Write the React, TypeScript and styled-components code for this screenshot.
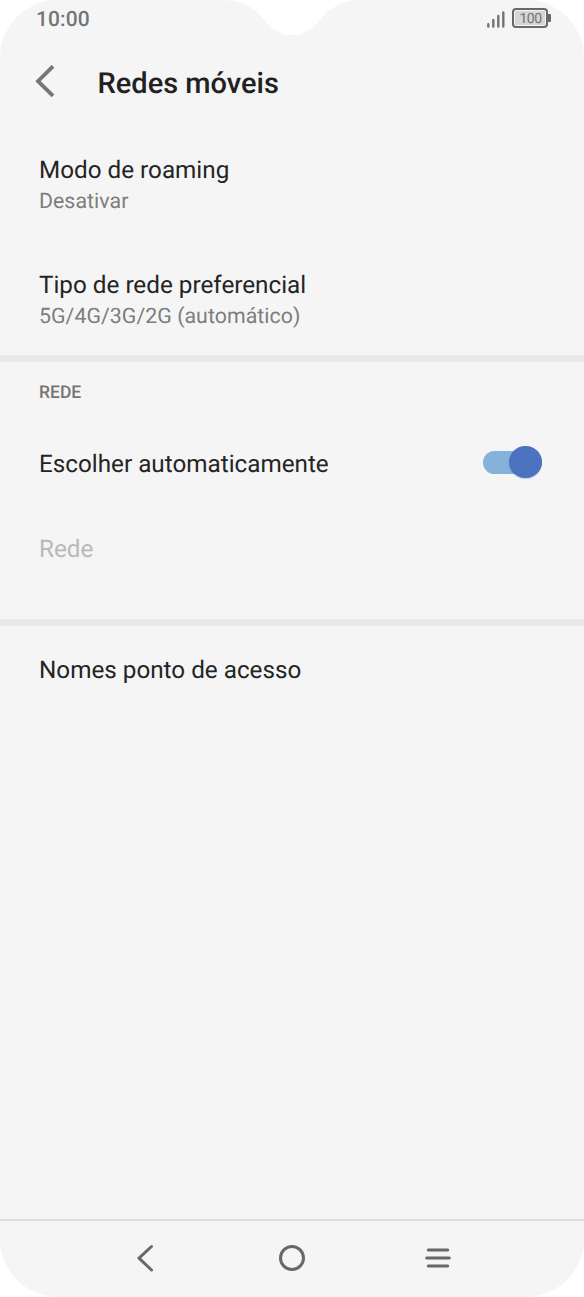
import React from 'react';
import styled, { createGlobalStyle } from 'styled-components';

const GlobalStyle = createGlobalStyle`
  * { box-sizing: border-box; }
  body { margin: 0; background: #fff; font-family: Roboto, sans-serif; text-rendering: geometricPrecision; }
`;

const Screen = styled.div`
  position: relative;
  display: flex;
  flex-direction: column;
  width: 584px;
  height: 1297px;
  overflow: hidden;
  border-radius: 58px;
  background: #f5f5f5;
`;

const Notch = styled.svg`
  position: absolute;
  top: 0;
  left: 222px;
`;

const StatusBar = styled.div`
  display: flex;
  justify-content: space-between;
  height: 40px;
  padding: 6px 33px 0 36px;
`;

const Clock = styled.span`
  height: 26px;
  margin-top: 1px;
  line-height: 26px;
  font-size: 21px;
  font-weight: 500;
  letter-spacing: 0.1px;
  color: #757575;
`;

const StatusIcons = styled.div`
  display: flex;
  gap: 7px;
`;

const Signal = styled.svg`
  margin-top: 4px;
`;

const Battery = styled.div`
  display: flex;
  align-items: center;
  height: 20px;
  margin-top: 2px;
`;

const BatteryBody = styled.div`
  display: flex;
  width: 36px;
  height: 20px;
  padding: 1px;
  border: 2px solid #686868;
  border-radius: 4px;
`;

const BatteryLevel = styled.span`
  flex: 1;
  padding-left: 1px;
  background: #d6d6d6;
  color: #737373;
  font-size: 14px;
  letter-spacing: -0.5px;
  line-height: 17px;
  height: 14px;
  text-align: center;
`;

const BatteryTip = styled.span`
  width: 3px;
  height: 8px;
  background: #686868;
  border-radius: 0 1px 1px 0;
`;

const Header = styled.header`
  display: flex;
  align-items: center;
  gap: 41.5px;
  height: 83px;
  padding-left: 35px;
`;

const Title = styled.h1`
  margin: 5px 0 0;
  font-size: 29px;
  line-height: 38px;
  font-weight: 500;
  color: #212121;
`;

const Section = styled.section<{ $height: number }>`
  height: ${({ $height }) => $height}px;
  padding: 0 42px 0 39px;
`;

const Row = styled.div<{ $height: number; $top: number }>`
  display: flex;
  justify-content: space-between;
  height: ${({ $height }) => $height}px;
  padding-top: ${({ $top }) => $top}px;
`;

const Label = styled.div<{ $disabled?: boolean }>`
  font-size: 24.25px;
  line-height: 30px;
  color: ${({ $disabled }) => ($disabled ? '#b9b9b9' : '#242424')};
`;

const Detail = styled.div`
  margin-top: 4px;
  font-size: 21.3px;
  line-height: 26px;
  letter-spacing: 0.05px;
  color: #7d7d7d;
`;

const Caption = styled.h2`
  margin: 0;
  font-size: 17.5px;
  line-height: 22px;
  font-weight: 500;
  color: #757575;
`;

const Divider = styled.div`
  height: 7px;
  background: #e8e8e8;
`;

const Switch = styled.div`
  display: flex;
  align-items: center;
  justify-content: flex-end;
  width: 58.5px;
  height: 23px;
  margin-top: 1.5px;
  margin-right: 0.4px;
  border-radius: 12px;
  background: #86b2da;
`;

const Thumb = styled.span`
  flex: none;
  width: 32.5px;
  height: 32.5px;
  border-radius: 50%;
  background: #4b73bf;
  box-shadow: 0 1px 1px rgba(75, 115, 191, 0.3);
`;

const NavBar = styled.nav`
  display: flex;
  justify-content: center;
  gap: 118px;
  height: 78px;
  margin-top: auto;
  padding-top: 23px;
  border-top: 2px solid #dcdcdc;
`;

const NavIcon = styled.svg`
  width: 28px;
  height: 28px;
  fill: none;
  stroke: #686868;
  stroke-width: 3;
  stroke-linecap: round;
  stroke-linejoin: round;
`;

export default function App() {
  return (
    <Screen>
      <GlobalStyle />
      <Notch width="140" height="36" viewBox="0 0 140 36">
        <path d="M0 0C20 0 33 8 43 21C51 31 60 35.3 70 35.3C80 35.3 89 31 97 21C107 8 120 0 140 0Z" fill="#fff" />
      </Notch>
      <StatusBar>
        <Clock>10:00</Clock>
        <StatusIcons>
          <Signal width="19" height="18" viewBox="0 0 19 18" fill="none" stroke="#737373" strokeWidth="2.4" strokeLinecap="round">
            <path d="M2.3 14.2V16.6M7.3 10V16.6M12.3 6V16.6M17.3 2.4V16.6" />
          </Signal>
          <Battery>
            <BatteryBody><BatteryLevel>100</BatteryLevel></BatteryBody>
            <BatteryTip />
          </Battery>
        </StatusIcons>
      </StatusBar>
      <Header>
        <svg width="21" height="34" viewBox="0 0 21 34" fill="none" stroke="#767676" strokeWidth="3.8">
          <path d="M18 1.3L3 16.2L18 30.8" />
        </svg>
        <Title>Redes móveis</Title>
      </Header>
      <Section $height={232}>
        <Row $height={114} $top={32}>
          <div>
            <Label>Modo de roaming</Label>
            <Detail>Desativar</Detail>
          </div>
        </Row>
        <Row $height={114} $top={33}>
          <div>
            <Label>Tipo de rede preferencial</Label>
            <Detail>5G/4G/3G/2G (automático)</Detail>
          </div>
        </Row>
      </Section>
      <Divider />
      <Section $height={257}>
        <Row $height={69} $top={20}><Caption>REDE</Caption></Row>
        <Row $height={85} $top={18}>
          <Label>Escolher automaticamente</Label>
          <Switch><Thumb /></Switch>
        </Row>
        <Row $height={85} $top={18}><Label $disabled>Rede</Label></Row>
      </Section>
      <Divider />
      <Section $height={90}>
        <Row $height={90} $top={29}><Label>Nomes ponto de acesso</Label></Row>
      </Section>
      <NavBar>
        <NavIcon viewBox="0 0 28 28"><path d="M19.5 2.5L7 14.2L19.5 26" /></NavIcon>
        <NavIcon viewBox="0 0 28 28"><circle cx="14" cy="14" r="11.5" /></NavIcon>
        <NavIcon viewBox="0 0 28 28"><path d="M4.3 6H23.7M2.7 14H25.3M4.3 22H23.7" /></NavIcon>
      </NavBar>
    </Screen>
  );
}
